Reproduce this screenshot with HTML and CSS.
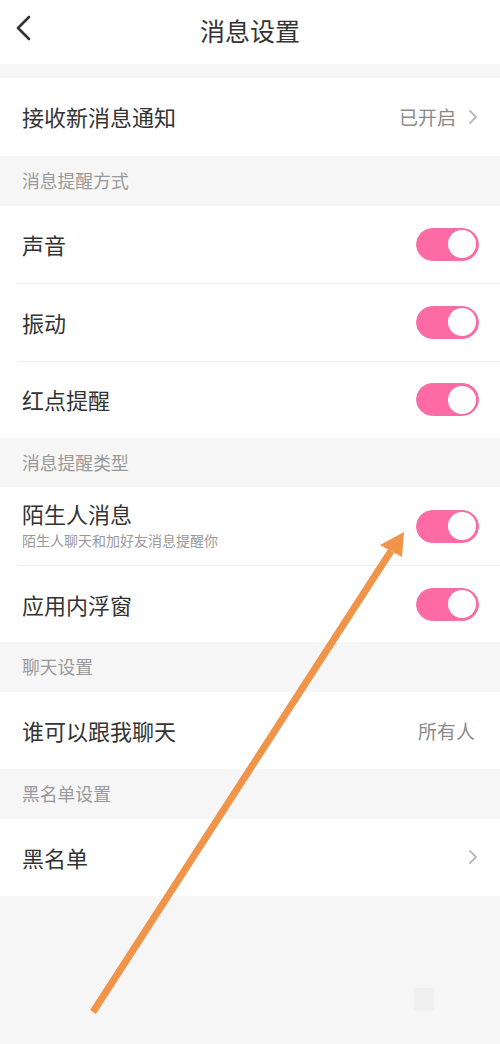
FILE: index.html
```html
<!DOCTYPE html>
<html lang="zh-CN">
<head>
<meta charset="utf-8">
<title>消息设置</title>
<link rel="stylesheet" href="styles.css">
</head>
<body>
<div class="page">
  <header class="topbar">
    <svg class="back" width="20" height="30" viewBox="0 0 20 30"><path d="M14 4 L3 15 L14 26" fill="none" stroke="#333" stroke-width="2.6" stroke-linecap="round" stroke-linejoin="round"/></svg>
    <h1 class="title">消息设置</h1>
  </header>
  <div class="gap"></div>

  <div class="group">
    <div class="row first">
      <span class="label">接收新消息通知</span>
      <span class="value">已开启<svg class="chev" width="10" height="16" viewBox="0 0 10 16"><path d="M2 2 L8 8 L2 14" fill="none" stroke="#bbb" stroke-width="2" stroke-linecap="round" stroke-linejoin="round"/></svg></span>
    </div>
  </div>

  <div class="section first-sec">消息提醒方式</div>
  <div class="group">
    <div class="row first"><span class="label">声音</span><span class="toggle"><span class="knob"></span></span></div>
    <div class="row"><span class="label">振动</span><span class="toggle"><span class="knob"></span></span></div>
    <div class="row"><span class="label">红点提醒</span><span class="toggle"><span class="knob"></span></span></div>
  </div>

  <div class="section">消息提醒类型</div>
  <div class="group">
    <div class="row first">
      <div class="stack">
        <span class="label">陌生人消息</span>
        <span class="sub">陌生人聊天和加好友消息提醒你</span>
      </div>
      <span class="toggle"><span class="knob"></span></span>
    </div>
    <div class="row"><span class="label">应用内浮窗</span><span class="toggle"><span class="knob"></span></span></div>
  </div>

  <div class="section">聊天设置</div>
  <div class="group">
    <div class="row first"><span class="label">谁可以跟我聊天</span><span class="value plain">所有人</span></div>
  </div>

  <div class="section">黑名单设置</div>
  <div class="group">
    <div class="row first">
      <span class="label">黑名单</span>
      <span class="value"><svg class="chev" width="10" height="16" viewBox="0 0 10 16"><path d="M2 2 L8 8 L2 14" fill="none" stroke="#bbb" stroke-width="2" stroke-linecap="round" stroke-linejoin="round"/></svg></span>
    </div>
  </div>

  <div class="watermark"></div>
  <svg class="arrow" width="500" height="1044" viewBox="0 0 500 1044">
    <line x1="93" y1="1012" x2="391" y2="551" stroke="#f0944a" stroke-width="7"/>
    <polygon points="404,532 380,545 402,557" fill="#f0944a"/>
  </svg>
</div>
</body>
</html>
```

FILE: styles.css
```css
* { box-sizing: border-box; margin: 0; padding: 0; }
html, body { width: 500px; height: 1044px; }
body {
  background: #f6f6f6;
  font-family: "Noto Sans CJK SC", "Noto Sans", sans-serif;
  color: #333;
  overflow: hidden;
}
.page { position: relative; width: 500px; height: 1044px; }

.topbar {
  height: 64px;
  background: #fff;
  display: flex;
  align-items: center;
  justify-content: center;
  position: relative;
}
.back { position: absolute; left: 15px; top: 13px; }
.title { font-size: 25px; font-weight: 400; color: #333; line-height: 1; margin-top: -4px; }

.gap { height: 14px; }

.group { background: #fff; }
.row {
  height: 77.5px;
  margin-left: 18px;
  padding: 0 21px 0 4px;
  display: flex;
  align-items: center;
  justify-content: space-between;
  border-top: 1px solid #efefef;
}
.row.first { border-top: none; }
.label { font-size: 22px; line-height: 1; color: #333; margin-top: -1px; }
.stack { display: flex; flex-direction: column; gap: 9px; margin-top: -4px; }
.stack .label { margin-top: 0; }
.sub { font-size: 14px; line-height: 1; color: #999; }

.value {
  display: flex;
  align-items: center;
  gap: 12px;
  font-size: 19px;
  color: #8a8a8a;
  line-height: 1;
  margin-right: 1px;
}
.value.plain { margin-right: 4px; }
.chev { display: block; }

.section {
  height: 49.4px;
  padding-left: 22px;
  display: flex;
  align-items: center;
  font-size: 17.8px;
  color: #999;
  line-height: 1;
}
.section.first-sec { height: 50px; }

.toggle {
  width: 63px;
  height: 33px;
  border-radius: 17px;
  background: #fd6aa4;
  border: 1px solid #ee72a8;
  display: flex;
  align-items: center;
  justify-content: flex-end;
  padding-right: 2px;
}
.knob {
  width: 28px;
  height: 28px;
  border-radius: 50%;
  background: #fff;
}

.watermark {
  position: absolute;
  left: 414px;
  top: 988px;
  width: 20px;
  height: 22px;
  background: #f0f0f0;
}
.arrow { position: absolute; left: 0; top: 0; pointer-events: none; }
```
